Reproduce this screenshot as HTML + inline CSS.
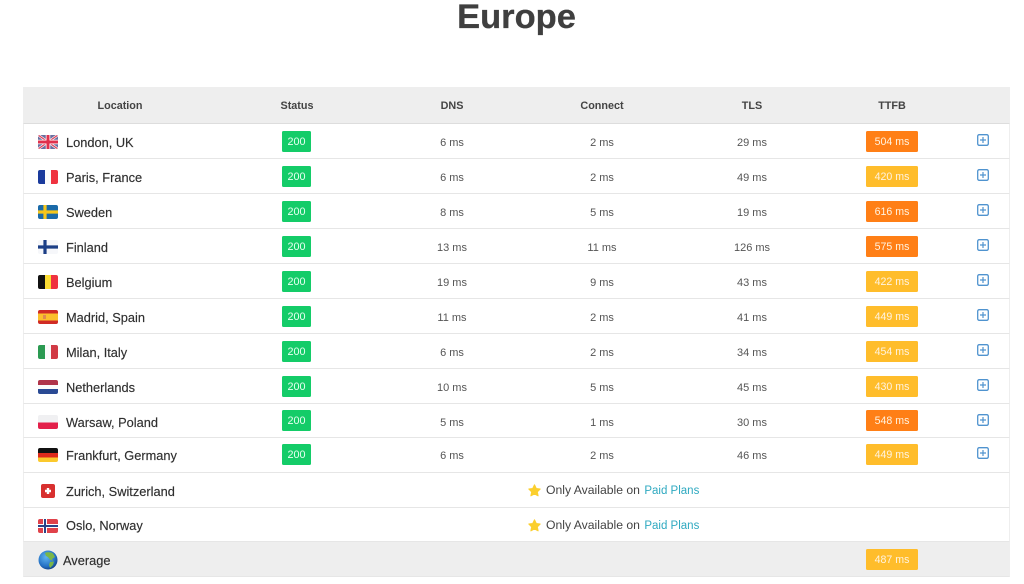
<!DOCTYPE html>
<html><head><meta charset="utf-8"><style>
html,body{margin:0;padding:0;background:#fff;width:1024px;height:584px;overflow:hidden;font-family:"Liberation Sans",sans-serif}
body{filter:blur(.35px)}
h1{position:absolute;left:0;width:1033px;top:-2px;margin:0;text-align:center;font-size:34.5px;line-height:38px;font-weight:bold;color:#3f3f3f;-webkit-text-stroke:.3px #3f3f3f}
.t{position:absolute;left:23px;width:987px;box-sizing:border-box;border-left:1px solid #eee;border-right:1px solid #eee;border-bottom:1px solid #e6e6e6}
.t>*{position:absolute}
.c{width:100px;text-align:center;font-size:11px;color:#555;top:1px;line-height:37px}
.h{background:#eee;top:87px;height:37px;border-bottom:1px solid #ddd}
.h .c{font-weight:bold;color:#444;font-size:10.8px!important}
.l{left:42px;font-size:12.8px;color:#2f2f2f;top:1px;line-height:35px;white-space:nowrap;-webkit-text-stroke:.15px #2f2f2f}
.f{left:14px;top:10.5px;width:20px;height:14px;border-radius:2px;overflow:hidden}
.b{background:#14cc68;color:#e8fff2;font-size:10.8px;text-align:center;left:258px;width:29px;height:21px;line-height:23px;top:7px;border-radius:1.5px}
.m{color:#fff3e0;font-size:10.6px;text-align:center;left:842px;width:52px;height:21px;line-height:23px;top:7px;border-radius:1.5px}
.o{background:#ff7f16}.y{background:#ffbd2b}
.p{left:953px;top:10px;width:12px;height:12px}
.a{left:522px;top:0;line-height:35px;font-size:12.2px;color:#444;white-space:nowrap}
.a b{font-weight:normal;color:#2ea9c0;font-size:11.5px;margin-left:1px}
.s{left:504px;top:11px;width:13px;height:13px}
</style></head><body>
<h1>Europe</h1>

<div class="t h" style="height:37px">
<div class="c" style="left:46px;font-size:10.5px">Location</div>
<div class="c" style="left:223px;font-size:10.5px">Status</div>
<div class="c" style="left:378px;font-size:10.5px">DNS</div>
<div class="c" style="left:528px;font-size:10.5px">Connect</div>
<div class="c" style="left:678px;font-size:10.5px">TLS</div>
<div class="c" style="left:818px;font-size:10.5px">TTFB</div>
</div>

<div class="t" style="top:124px;height:35px">
<svg class="f" viewBox="0 0 20 14"><rect width="20" height="14" fill="#6a6f9f"/><path d="M0 0L20 14M20 0L0 14" stroke="#fff" stroke-width="2.500"/><path d="M0 0L20 14M20 0L0 14" stroke="#e0445c" stroke-width="1.300"/><path d="M10 0V14M0 7H20" stroke="#fff" stroke-width="4.500"/><path d="M10 0V14M0 7H20" stroke="#e0304c" stroke-width="3"/></svg>
<div class="l">London, UK</div><div class="b">200</div>
<div class="c" style="left:378px">6 ms</div><div class="c" style="left:528px">2 ms</div><div class="c" style="left:678px">29 ms</div>
<div class="m o">504 ms</div>
<svg class="p" viewBox="0 0 12 12"><rect x=".7" y=".7" width="10.6" height="10.6" rx="1.500" fill="none" stroke="#4f93cf" stroke-width="1.300"/><path d="M6 3V9M3 6H9" stroke="#4f93cf" stroke-width="1.200"/></svg>
</div>

<div class="t" style="top:159px;height:35px">
<svg class="f" viewBox="0 0 20 14"><rect width="7" height="14" fill="#1a3a9c"/><rect x="7" width="6" height="14" fill="#fbfbfb"/><rect x="13" width="7" height="14" fill="#ef3340"/></svg>
<div class="l">Paris, France</div><div class="b">200</div>
<div class="c" style="left:378px">6 ms</div><div class="c" style="left:528px">2 ms</div><div class="c" style="left:678px">49 ms</div>
<div class="m y">420 ms</div>
<svg class="p" viewBox="0 0 12 12"><rect x=".7" y=".7" width="10.6" height="10.6" rx="1.500" fill="none" stroke="#4f93cf" stroke-width="1.300"/><path d="M6 3V9M3 6H9" stroke="#4f93cf" stroke-width="1.200"/></svg>
</div>

<div class="t" style="top:194px;height:35px">
<svg class="f" viewBox="0 0 20 14"><rect width="20" height="14" fill="#1a6aa8"/><path d="M7 0V14M0 7H20" stroke="#f5c61c" stroke-width="3.200"/></svg>
<div class="l">Sweden</div><div class="b">200</div>
<div class="c" style="left:378px">8 ms</div><div class="c" style="left:528px">5 ms</div><div class="c" style="left:678px">19 ms</div>
<div class="m o">616 ms</div>
<svg class="p" viewBox="0 0 12 12"><rect x=".7" y=".7" width="10.6" height="10.6" rx="1.500" fill="none" stroke="#4f93cf" stroke-width="1.300"/><path d="M6 3V9M3 6H9" stroke="#4f93cf" stroke-width="1.200"/></svg>
</div>

<div class="t" style="top:229px;height:35px">
<svg class="f" viewBox="0 0 20 14"><rect width="20" height="14" fill="#f6f7fa"/><path d="M7 0V14M0 7H20" stroke="#1c3f86" stroke-width="3.200"/></svg>
<div class="l">Finland</div><div class="b">200</div>
<div class="c" style="left:378px">13 ms</div><div class="c" style="left:528px">11 ms</div><div class="c" style="left:678px">126 ms</div>
<div class="m o">575 ms</div>
<svg class="p" viewBox="0 0 12 12"><rect x=".7" y=".7" width="10.6" height="10.6" rx="1.500" fill="none" stroke="#4f93cf" stroke-width="1.300"/><path d="M6 3V9M3 6H9" stroke="#4f93cf" stroke-width="1.200"/></svg>
</div>

<div class="t" style="top:264px;height:35px">
<svg class="f" viewBox="0 0 20 14"><rect width="7" height="14" fill="#111"/><rect x="7" width="6" height="14" fill="#fbdc33"/><rect x="13" width="7" height="14" fill="#ef3340"/></svg>
<div class="l">Belgium</div><div class="b">200</div>
<div class="c" style="left:378px">19 ms</div><div class="c" style="left:528px">9 ms</div><div class="c" style="left:678px">43 ms</div>
<div class="m y">422 ms</div>
<svg class="p" viewBox="0 0 12 12"><rect x=".7" y=".7" width="10.6" height="10.6" rx="1.500" fill="none" stroke="#4f93cf" stroke-width="1.300"/><path d="M6 3V9M3 6H9" stroke="#4f93cf" stroke-width="1.200"/></svg>
</div>

<div class="t" style="top:299px;height:35px">
<svg class="f" viewBox="0 0 20 14"><rect width="20" height="14" fill="#d02b25"/><rect y="3.500" width="20" height="7" fill="#fbc02d"/><rect x="5" y="5" width="3" height="4" fill="#e08a50"/></svg>
<div class="l">Madrid, Spain</div><div class="b">200</div>
<div class="c" style="left:378px">11 ms</div><div class="c" style="left:528px">2 ms</div><div class="c" style="left:678px">41 ms</div>
<div class="m y">449 ms</div>
<svg class="p" viewBox="0 0 12 12"><rect x=".7" y=".7" width="10.6" height="10.6" rx="1.500" fill="none" stroke="#4f93cf" stroke-width="1.300"/><path d="M6 3V9M3 6H9" stroke="#4f93cf" stroke-width="1.200"/></svg>
</div>

<div class="t" style="top:334px;height:35px">
<svg class="f" viewBox="0 0 20 14"><rect width="7" height="14" fill="#2b9a52"/><rect x="7" width="6" height="14" fill="#fbfbfb"/><rect x="13" width="7" height="14" fill="#d13a45"/></svg>
<div class="l">Milan, Italy</div><div class="b">200</div>
<div class="c" style="left:378px">6 ms</div><div class="c" style="left:528px">2 ms</div><div class="c" style="left:678px">34 ms</div>
<div class="m y">454 ms</div>
<svg class="p" viewBox="0 0 12 12"><rect x=".7" y=".7" width="10.6" height="10.6" rx="1.500" fill="none" stroke="#4f93cf" stroke-width="1.300"/><path d="M6 3V9M3 6H9" stroke="#4f93cf" stroke-width="1.200"/></svg>
</div>

<div class="t" style="top:369px;height:35px">
<svg class="f" viewBox="0 0 20 14"><rect width="20" height="5" fill="#b0344a"/><rect y="5" width="20" height="4" fill="#fbfbfb"/><rect y="9" width="20" height="5" fill="#2a4a94"/></svg>
<div class="l">Netherlands</div><div class="b">200</div>
<div class="c" style="left:378px">10 ms</div><div class="c" style="left:528px">5 ms</div><div class="c" style="left:678px">45 ms</div>
<div class="m y">430 ms</div>
<svg class="p" viewBox="0 0 12 12"><rect x=".7" y=".7" width="10.6" height="10.6" rx="1.500" fill="none" stroke="#4f93cf" stroke-width="1.300"/><path d="M6 3V9M3 6H9" stroke="#4f93cf" stroke-width="1.200"/></svg>
</div>

<div class="t" style="top:404px;height:34px">
<svg class="f" viewBox="0 0 20 14"><rect width="20" height="7.500" fill="#f0f0f2"/><rect y="7.500" width="20" height="6.500" fill="#e3204a"/></svg>
<div class="l">Warsaw, Poland</div><div class="b" style="top:6px">200</div>
<div class="c" style="left:378px">5 ms</div><div class="c" style="left:528px">1 ms</div><div class="c" style="left:678px">30 ms</div>
<div class="m o" style="top:6px">548 ms</div>
<svg class="p" viewBox="0 0 12 12"><rect x=".7" y=".7" width="10.6" height="10.6" rx="1.500" fill="none" stroke="#4f93cf" stroke-width="1.300"/><path d="M6 3V9M3 6H9" stroke="#4f93cf" stroke-width="1.200"/></svg>
</div>

<div class="t" style="top:438px;height:35px">
<svg class="f" style="top:9.500px" viewBox="0 0 20 14"><rect width="20" height="5" fill="#111"/><rect y="5" width="20" height="4.500" fill="#dd2a1c"/><rect y="9.500" width="20" height="4.500" fill="#fbc92d"/></svg>
<div class="l" style="line-height:33px">Frankfurt, Germany</div><div class="b" style="top:6px">200</div>
<div class="c" style="left:378px;line-height:35px">6 ms</div><div class="c" style="left:528px;line-height:35px">2 ms</div><div class="c" style="left:678px;line-height:35px">46 ms</div>
<div class="m y" style="top:6px">449 ms</div>
<svg class="p" style="top:9px" viewBox="0 0 12 12"><rect x=".7" y=".7" width="10.6" height="10.6" rx="1.500" fill="none" stroke="#4f93cf" stroke-width="1.300"/><path d="M6 3V9M3 6H9" stroke="#4f93cf" stroke-width="1.200"/></svg>
</div>

<div class="t" style="top:473px;height:35px">
<svg class="f" viewBox="0 0 20 14"><rect x="3" width="14" height="14" rx="2" fill="#d8302f"/><path d="M10 4V10M7 7H13" stroke="#fff" stroke-width="2.400"/></svg>
<div class="l">Zurich, Switzerland</div>
<svg class="s" viewBox="0 0 24 24"><path d="M12 1.500l3.200 6.800 7.300 1-5.300 5.100 1.400 7.400-6.600-3.600-6.600 3.600 1.400-7.400L1.500 9.300l7.300-1z" fill="#fbcf2e" stroke="#fbcf2e" stroke-width="2" stroke-linejoin="round"/></svg>
<div class="a">Only Available on <b>Paid Plans</b></div>
</div>

<div class="t" style="top:508px;height:34px">
<svg class="f" viewBox="0 0 20 14"><rect width="20" height="14" fill="#e0424a"/><path d="M7 0V14M0 7H20" stroke="#fff" stroke-width="4"/><path d="M7 0V14M0 7H20" stroke="#2a4488" stroke-width="2"/></svg>
<div class="l" style="line-height:33px">Oslo, Norway</div>
<svg class="s" viewBox="0 0 24 24"><path d="M12 1.500l3.200 6.800 7.300 1-5.300 5.100 1.400 7.400-6.600-3.600-6.600 3.600 1.400-7.400L1.500 9.300l7.300-1z" fill="#fbcf2e" stroke="#fbcf2e" stroke-width="2" stroke-linejoin="round"/></svg>
<div class="a">Only Available on <b>Paid Plans</b></div>
</div>

<div class="t" style="top:542px;height:35px;background:#eee">
<svg style="left:14px;top:7.500px;width:20px;height:20px" viewBox="0 0 20 20"><defs><radialGradient id="g" cx=".4" cy=".35" r=".7"><stop offset="0" stop-color="#5fb4f0"/><stop offset=".7" stop-color="#2470c4"/><stop offset="1" stop-color="#123e80"/></radialGradient></defs><circle cx="10" cy="10" r="9.500" fill="url(#g)"/><path d="M7 3C9 2 13 2 15 3.500L17 7 14 9 15 11 12 9.500 10 7 8 6zM12 12L16 11.500 15 15 12 18 11 15z" fill="#7ab648"/></svg>
<div class="l" style="left:39px;line-height:36px">Average</div>
<div class="m y">487 ms</div>
</div>
</body></html>
